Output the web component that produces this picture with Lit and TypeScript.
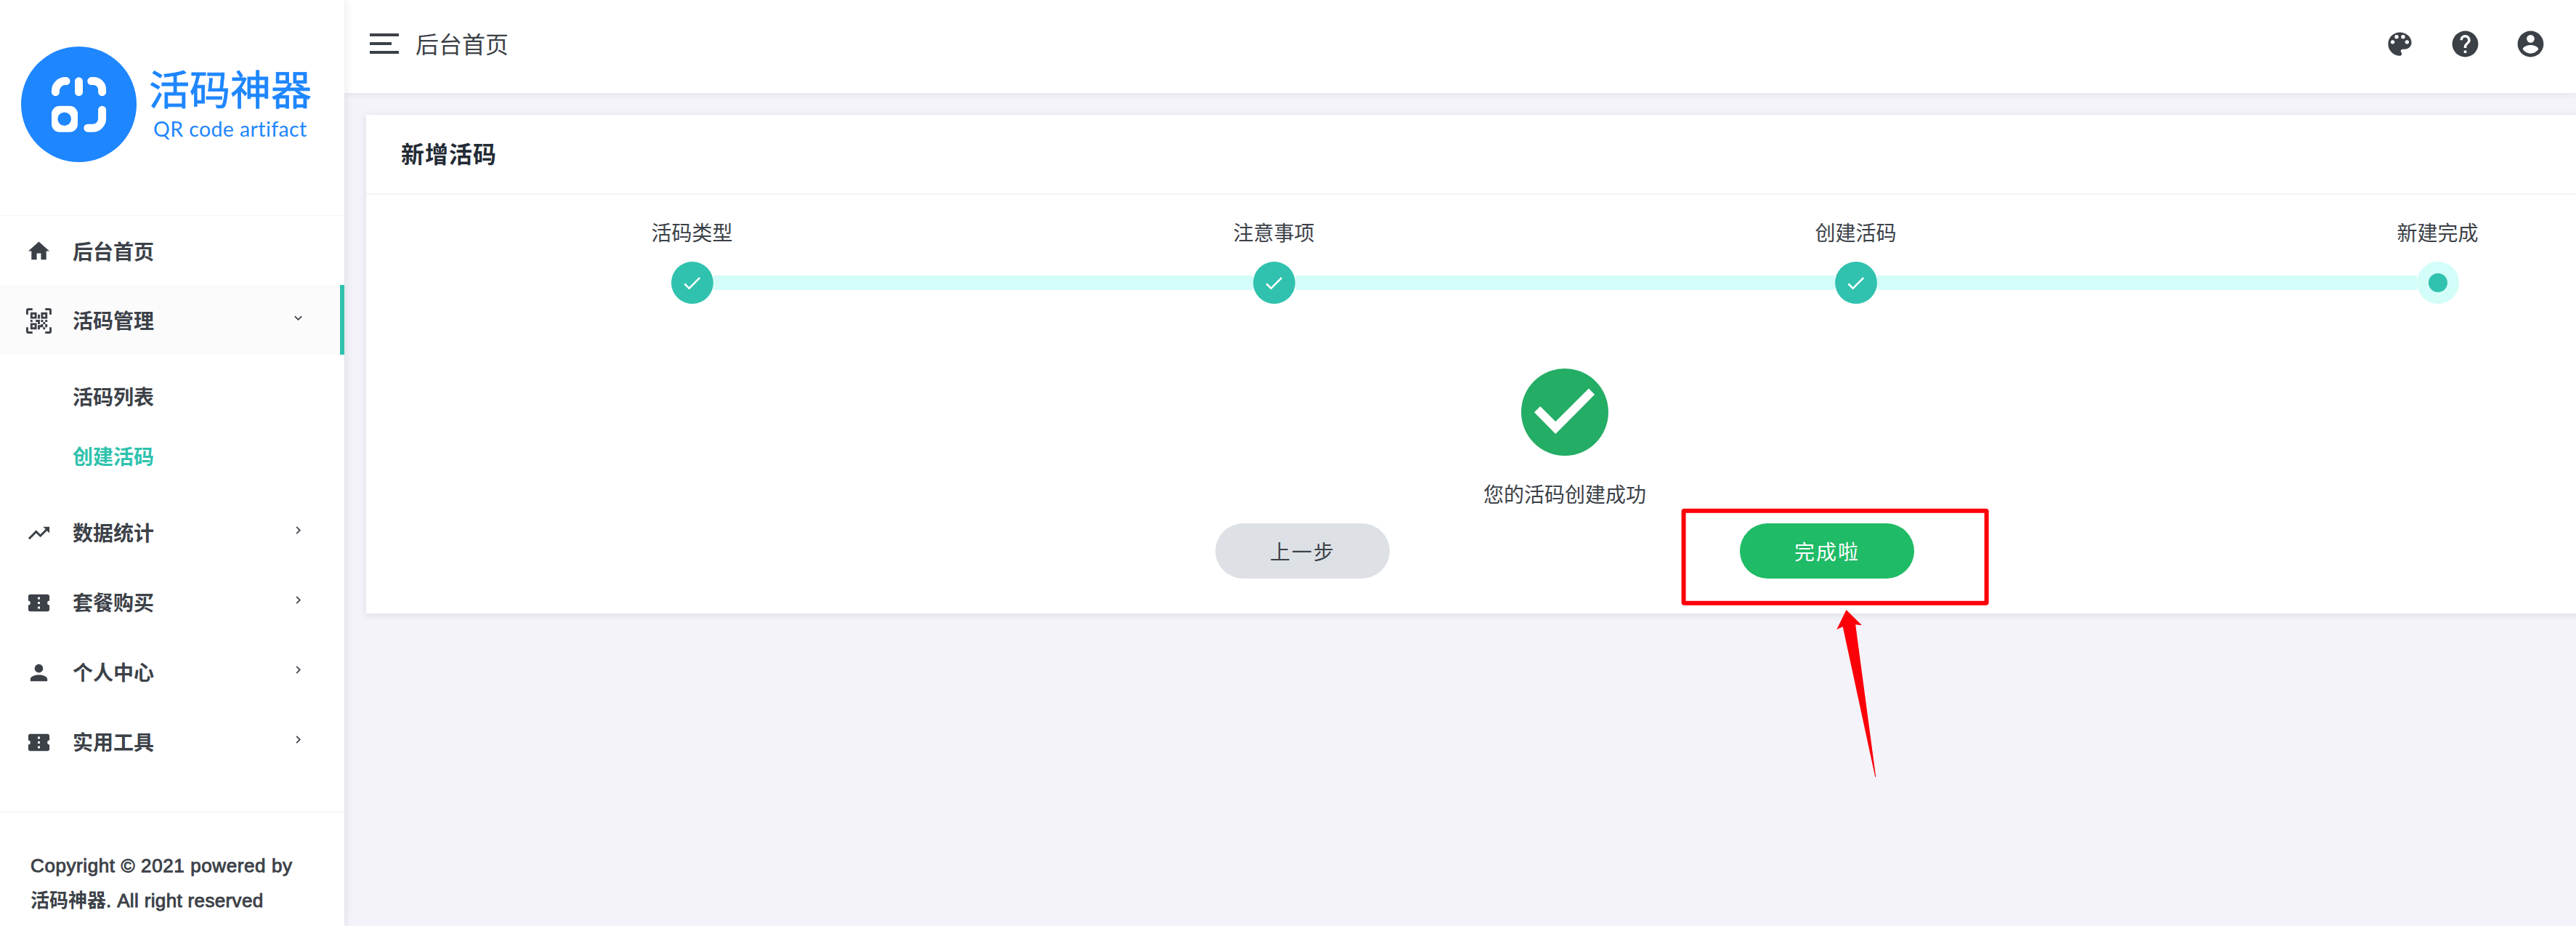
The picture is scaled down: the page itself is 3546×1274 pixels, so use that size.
import { LitElement, css, html, nothing } from 'lit';
import { customElement, property } from 'lit/decorators.js';
import { classMap } from 'lit/directives/class-map.js';

const icons: Record<string, string> = {
  home: 'M10,20V14H14V20H19V12H22L12,3L2,12H5V20H10Z',
  qrcode:
    'M4,4H10V10H4V4M20,4V10H14V4H20M14,15H16V13H14V11H16V13H18V11H20V13H18V15H20V18H18V20H16V18H13V20H11V16H14V15M16,15V18H18V15H16M4,20V14H10V20H4M6,6V8H8V6H6M16,6V8H18V6H16M6,16V18H8V16H6M4,11H6V13H4V11M9,11H13V15H11V13H9V11M11,6H13V10H11V6M2,2V6H0V2A2,2 0 0,1 2,0H6V2H2M22,0A2,2 0 0,1 24,2V6H22V2H18V0H22M2,18V22H6V24H2A2,2 0 0,1 0,22V18H2M22,22V18H24V22A2,2 0 0,1 22,24H18V22H22Z',
  trending:
    'M16,6L18.29,8.29L13.41,13.17L9.41,9.17L2,16.59L3.41,18L9.41,12L13.41,16L19.71,9.71L22,12V6H16Z',
  ticket:
    'M13,8.5H11V6.5H13V8.5M13,13H11V11H13V13M13,17.5H11V15.5H13V17.5M22,10V6C22,4.89 21.1,4 20,4H4A2,2 0 0,0 2,6V10C3.11,10 4,10.9 4,12A2,2 0 0,1 2,14V18A2,2 0 0,0 4,20H20A2,2 0 0,0 22,18V14A2,2 0 0,1 20,12A2,2 0 0,1 22,10Z',
  account:
    'M12,4A4,4 0 0,1 16,8A4,4 0 0,1 12,12A4,4 0 0,1 8,8A4,4 0 0,1 12,4M12,14C16.42,14 20,15.79 20,18V20H4V18C4,15.79 7.58,14 12,14Z',
  right: 'M8.59,16.58L13.17,12L8.59,7.41L10,6L16,12L10,18L8.59,16.58Z',
  down: 'M7.41,8.58L12,13.17L16.59,8.58L18,10L12,16L6,10L7.41,8.58Z',
  palette:
    'M17.5,12A1.5,1.5 0 0,1 16,10.5A1.5,1.5 0 0,1 17.5,9A1.5,1.5 0 0,1 19,10.5A1.5,1.5 0 0,1 17.5,12M14.5,8A1.5,1.5 0 0,1 13,6.5A1.5,1.5 0 0,1 14.5,5A1.5,1.5 0 0,1 16,6.5A1.5,1.5 0 0,1 14.5,8M9.5,8A1.5,1.5 0 0,1 8,6.5A1.5,1.5 0 0,1 9.5,5A1.5,1.5 0 0,1 11,6.5A1.5,1.5 0 0,1 9.5,8M6.5,12A1.5,1.5 0 0,1 5,10.5A1.5,1.5 0 0,1 6.5,9A1.5,1.5 0 0,1 8,10.5A1.5,1.5 0 0,1 6.5,12M12,3A9,9 0 0,0 3,12A9,9 0 0,0 12,21A1.5,1.5 0 0,0 13.5,19.5C13.5,19.11 13.35,18.76 13.11,18.5C12.88,18.23 12.73,17.88 12.73,17.5A1.5,1.5 0 0,1 14.23,16H16A5,5 0 0,0 21,11C21,6.58 16.97,3 12,3Z',
  help: 'M15.07,11.25L14.17,12.17C13.45,12.89 13,13.5 13,15H11V14.5C11,13.39 11.45,12.39 12.17,11.67L13.41,10.41C13.78,10.05 14,9.55 14,9C14,7.89 13.1,7 12,7A2,2 0 0,0 10,9H8A4,4 0 0,1 12,5A4,4 0 0,1 16,9C16,9.88 15.64,10.67 15.07,11.25M13,19H11V17H13M12,2A10,10 0 0,0 2,12A10,10 0 0,0 12,22A10,10 0 0,0 22,12C22,6.47 17.5,2 12,2Z',
  profile:
    'M12,19.2C9.5,19.2 7.29,17.92 6,16C6.03,14 10,12.9 12,12.9C14,12.9 17.97,14 18,16C16.71,17.92 14.5,19.2 12,19.2M12,5A3,3 0 0,1 15,8A3,3 0 0,1 12,11A3,3 0 0,1 9,8A3,3 0 0,1 12,5M12,2A10,10 0 0,0 2,12A10,10 0 0,0 12,22A10,10 0 0,0 22,12C22,6.47 17.5,2 12,2Z',
  check: 'M21,7L9,19L3.5,13.5L4.91,12.09L9,16.17L19.59,5.59L21,7Z',
};

@customElement('mdi-icon')
class MdiIcon extends LitElement {
  @property() name = '';

  static styles = css`
    :host {
      display: block;
      flex: none;
    }

    svg {
      display: block;
      width: 100%;
      height: 100%;
      fill: currentColor;
    }
  `;

  render() {
    return html`<svg viewBox="0 0 24 24"><path d=${icons[this.name]}></path></svg>`;
  }
}

interface MenuItem {
  icon: string;
  label: string;
  arrow?: string;
  active?: boolean;
  children?: { label: string; active?: boolean }[];
}

const menu: MenuItem[] = [
  { icon: 'home', label: '后台首页' },
  {
    icon: 'qrcode',
    label: '活码管理',
    arrow: 'down',
    active: true,
    children: [{ label: '活码列表' }, { label: '创建活码', active: true }],
  },
  { icon: 'trending', label: '数据统计', arrow: 'right' },
  { icon: 'ticket', label: '套餐购买', arrow: 'right' },
  { icon: 'account', label: '个人中心', arrow: 'right' },
  { icon: 'ticket', label: '实用工具', arrow: 'right' },
];

@customElement('side-bar')
class SideBar extends LitElement {
  static styles = css`
    :host {
      display: block;
      flex: none;
      width: 474px;
      height: 100%;
      background: #fff;
      box-shadow: 0 0 12px rgba(30, 50, 60, 0.12);
      position: relative;
      z-index: 2;
    }

    .logo {
      box-sizing: border-box;
      display: flex;
      height: 296px;
      padding: 64px 0 0 29px;
      color: #1e86ff;
    }

    .logo svg {
      flex: none;
      width: 159px;
      height: 159px;
    }

    .brand {
      padding: 21px 0 0 17px;
      white-space: nowrap;
    }

    .name {
      font-size: 56px;
      line-height: 80px;
      -webkit-text-stroke: 0.8px #1e86ff;
    }

    .latin {
      margin-top: -5px;
      padding-left: 6px;
      font-family: Lato, sans-serif;
      font-size: 28.5px;
      line-height: 34px;
      letter-spacing: 0.4px;
    }

    nav {
      box-sizing: border-box;
      height: 820px;
      border-top: 1px solid #f3f4f5;
      margin-right: 2px;
    }

    .item {
      box-sizing: border-box;
      display: flex;
      align-items: center;
      height: 96px;
      margin-right: -2px;
      padding: 0 47px 0 36px;
      border-right: 6px solid transparent;
      font-size: 28px;
      font-weight: 700;
    }

    .item:first-child {
      height: 95px;
    }

    .item.active {
      background: #fbfbfb;
      border-right-color: #30c2ae;
    }

    .icon {
      width: 35px;
      height: 35px;
      margin: 2px 29px 0 0;
    }

    .label {
      flex: 1;
    }

    .arrow {
      width: 21px;
      height: 21px;
      margin-bottom: 6px;
    }

    .sub {
      padding: 19px 0 13px 100px;
    }

    .link {
      font-size: 28px;
      font-weight: 700;
      line-height: 82px;
    }

    .link.active {
      color: #30c2ae;
    }

    .copyright {
      border-top: 2px solid #f3f4f5;
      padding: 49px 0 0 42px;
      font-size: 26px;
      line-height: 48px;
      letter-spacing: 0.6px;
      white-space: nowrap;
      -webkit-text-stroke: 0.9px #3c4148;
    }

    .rights {
      letter-spacing: 0.35px;
    }

    .owner {
      font-weight: 700;
      letter-spacing: 0;
      -webkit-text-stroke: 0;
    }
  `;

  render() {
    return html`
      <div class="logo">
        <svg viewBox="29 64 159 159" fill="none">
          <circle cx="108.5" cy="143.5" r="79.5" fill="#1e86ff"></circle>
          <g stroke="#fff" stroke-width="11" stroke-linecap="round">
            <path d="M76.4 126.7V125A13.4 13.4 0 0 1 89.8 111.6H91"></path>
            <path d="M108.5 111.8V126.7"></path>
            <path d="M125.8 111.6H129A11.6 11.6 0 0 1 140.6 123.2V126.7"></path>
            <path d="M140.6 151.2V163A13 13 0 0 1 127.6 176.2H120.8"></path>
          </g>
          <rect x="71" y="145.7" width="36" height="36" rx="11" fill="#fff"></rect>
          <circle cx="88.7" cy="163.7" r="9.3" fill="#1e86ff"></circle>
        </svg>
        <div class="brand">
          <div class="name">活码神器</div>
          <div class="latin">QR code artifact</div>
        </div>
      </div>
      <nav>
        ${menu.map(
          (item) => html`
            <div class=${classMap({ item: true, active: !!item.active })}>
              <mdi-icon class="icon" name=${item.icon}></mdi-icon>
              <span class="label">${item.label}</span>
              ${item.arrow ? html`<mdi-icon class="arrow" name=${item.arrow}></mdi-icon>` : nothing}
            </div>
            ${item.children
              ? html`<div class="sub">
                  ${item.children.map(
                    (c) => html`<div class=${classMap({ link: true, active: !!c.active })}>${c.label}</div>`
                  )}
                </div>`
              : nothing}
          `
        )}
      </nav>
      <div class="copyright">
        <div>Copyright © 2021 powered by</div>
        <div class="rights"><span class="owner">活码神器</span>. All right reserved</div>
      </div>
    `;
  }
}

@customElement('top-bar')
class TopBar extends LitElement {
  static styles = css`
    :host {
      box-sizing: border-box;
      display: flex;
      align-items: center;
      justify-content: space-between;
      height: 128px;
      padding: 0 41px 8px 35px;
      background: #fff;
      box-shadow: 0 4px 8px rgba(30, 50, 60, 0.05);
    }

    .left,
    .actions {
      display: flex;
      align-items: center;
    }

    .toggle {
      display: grid;
      gap: 8px;
      width: 40px;
      margin-right: 23px;
    }

    .bar {
      height: 4px;
      background: #3c4148;
    }

    .bar.short {
      width: 30px;
    }

    .title {
      padding-top: 3px;
      font-size: 32px;
      line-height: 48px;
    }

    .actions {
      gap: 47px;
    }

    .actions mdi-icon {
      width: 43px;
      height: 43px;
    }
  `;

  render() {
    return html`
      <div class="left">
        <div class="toggle">
          <div class="bar"></div>
          <div class="bar short"></div>
          <div class="bar"></div>
        </div>
        <span class="title">后台首页</span>
      </div>
      <div class="actions">
        <mdi-icon name="palette"></mdi-icon>
        <mdi-icon name="help"></mdi-icon>
        <mdi-icon name="profile"></mdi-icon>
      </div>
    `;
  }
}

const steps = ['活码类型', '注意事项', '创建活码', '新建完成'];

@customElement('wizard-card')
class WizardCard extends LitElement {
  static styles = css`
    :host {
      box-sizing: border-box;
      display: block;
      width: 3300px;
      height: 686px;
      background: #fff;
      box-shadow: 0 2px 10px rgba(30, 50, 60, 0.1);
    }

    .head {
      box-sizing: border-box;
      height: 110px;
      padding-left: 48px;
      border-bottom: 2px solid #f3f4f5;
      color: #232b35;
      font-size: 32px;
      font-weight: 700;
      letter-spacing: 1px;
      line-height: 110px;
    }

    .steps {
      display: grid;
      grid-template-columns: repeat(4, 801px);
      justify-content: center;
      padding-top: 33px;
    }

    .step {
      text-align: center;
      font-size: 28px;
      line-height: 42px;
    }

    .node {
      display: flex;
      align-items: center;
      margin-top: 17px;
    }

    .line {
      flex: 1;
      height: 20px;
      background: #d3fdf8;
    }

    .step:first-child .line:first-child,
    .step:last-child .line:last-child {
      background: none;
    }

    .dot {
      display: flex;
      align-items: center;
      justify-content: center;
      width: 58px;
      height: 58px;
      border-radius: 50%;
      background: #30c2ae;
      color: #fff;
    }

    .dot mdi-icon {
      width: 31px;
      height: 31px;
    }

    .dot.current {
      background: #d3fdf8;
    }

    .core {
      width: 26px;
      height: 26px;
      border-radius: 50%;
      background: #30c2ae;
    }

    .result {
      display: flex;
      flex-direction: column;
      align-items: center;
      padding-top: 89px;
      font-size: 28px;
    }

    .result svg {
      width: 120px;
      height: 120px;
    }

    .message {
      margin-top: 34px;
      line-height: 42px;
    }

    .buttons {
      display: flex;
      justify-content: center;
      gap: 482px;
      padding-top: 17px;
    }

    button {
      width: 240px;
      height: 76px;
      border: 0;
      padding: 0;
      border-radius: 38px;
      background: #dde1e6;
      color: inherit;
      font: inherit;
      font-size: 28px;
      letter-spacing: 2px;
    }

    .done {
      background: #1fbb66;
      color: #fff;
    }
  `;

  render() {
    return html`
      <div class="head">新增活码</div>
      <div class="steps">
        ${steps.map(
          (label, i) => html`
            <div class="step">
              <div>${label}</div>
              <div class="node">
                <div class="line"></div>
                ${i < steps.length - 1
                  ? html`<div class="dot"><mdi-icon name="check"></mdi-icon></div>`
                  : html`<div class="dot current"><div class="core"></div></div>`}
                <div class="line"></div>
              </div>
            </div>
          `
        )}
      </div>
      <div class="result">
        <svg viewBox="0 0 120 120">
          <circle cx="60" cy="60" r="60" fill="#24ad65"></circle>
          <path d="M18 60.3L26.2 52L47.3 73L93 27.5L101.2 35.8L47.3 90Z" fill="#fff"></path>
        </svg>
        <div class="message">您的活码创建成功</div>
      </div>
      <div class="buttons">
        <button>上一步</button>
        <button class="done">完成啦</button>
      </div>
    `;
  }
}

@customElement('app-root')
class AppRoot extends LitElement {
  static styles = css`
    :host {
      display: flex;
      position: relative;
      width: 100%;
      height: 1274px;
      overflow: hidden;
      background: #f3f3f9;
      color: #3c4148;
      font-family: 'Liberation Sans', 'Noto Sans CJK SC', sans-serif;
    }

    main {
      flex: 1;
      min-width: 0;
    }

    wizard-card {
      margin: 30px 0 0 30px;
    }

    .marker {
      position: absolute;
      left: 2314px;
      top: 699px;
      z-index: 3;
      width: 426px;
      height: 374px;
    }
  `;

  render() {
    return html`
      <side-bar></side-bar>
      <main>
        <top-bar></top-bar>
        <wizard-card></wizard-card>
      </main>
      <svg class="marker" viewBox="2314 699 426 374">
        <rect x="2317.6" y="702.8" width="417" height="127" rx="1" fill="none" stroke="#fc0009" stroke-width="6"></rect>
        <path d="M2541.5 839L2563 860.2L2554.2 859.3L2582.2 1069H2581.3L2536.7 862.3L2528.3 866Z" fill="#fc0009"></path>
      </svg>
    `;
  }
}
